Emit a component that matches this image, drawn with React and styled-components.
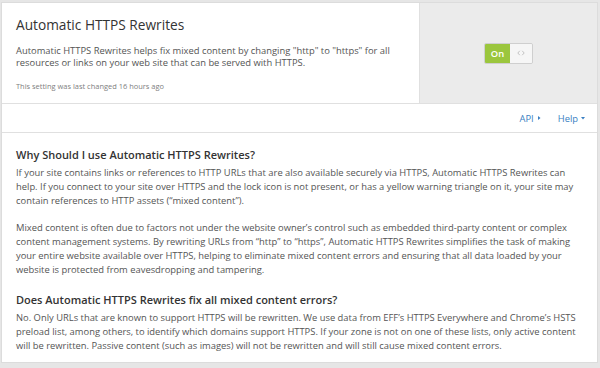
import React from "react";
import styled, { createGlobalStyle } from "styled-components";

const Global = createGlobalStyle`
  html, body { margin: 0; padding: 0; background: #e6e6e6; }
  body { font-family: "Open Sans", "Liberation Sans", sans-serif; color: #555; }
  * { box-sizing: border-box; }
`;

const Page = styled.div`
  padding: 2px 2px 5px 1px;
  width: 600px;
  height: 368px;
`;

const Card = styled.div`
  background: #fff;
  border: 1px solid #dcdcdc;
  display: flex;
  flex-direction: column;
`;

const Top = styled.div`
  display: flex;
  border-bottom: 1px solid #e0e0e0;
`;

const Info = styled.div`
  width: 417px;
  padding: 13px 15px 11px 14px;
  display: flex;
  flex-direction: column;
`;

const Title = styled.h2`
  margin: 0;
  font-size: 13.7px;
  line-height: 18px;
  font-weight: 400;
  color: #333;
`;

const Desc = styled.p`
  margin: 10.5px 0 0;
  font-size: 9.38px;
  line-height: 12.8px;
  color: #555;
`;

const Meta = styled.p`
  margin: 11px 0 0;
  font-size: 7.46px;
  line-height: 11px;
  color: #808080;
`;

const Control = styled.div`
  flex: 1;
  background: #ebebeb;
  border-left: 1px solid #e0e0e0;
  display: flex;
  align-items: center;
  justify-content: center;
`;

const Toggle = styled.div`
  display: flex;
  width: 49px;
  height: 21px;
  border: 1px solid #cfcfcf;
  border-radius: 2px;
  overflow: hidden;
`;

const ToggleOn = styled.div`
  width: 25px;
  background: #9bc63d;
  color: #fff;
  font-size: 9.4px;
  font-weight: 600;
  display: flex;
  align-items: center;
  justify-content: center;
`;

const ToggleKnob = styled.div`
  flex: 1;
  background: #f6f6f6;
  display: flex;
  align-items: center;
  justify-content: center;
`;

const Toolbar = styled.div`
  height: 29px;
  display: flex;
  align-items: center;
  justify-content: flex-end;
  gap: 17px;
  padding-right: 12px;
  border-bottom: 1px solid #e0e0e0;
`;

const ToolLink = styled.a`
  font-size: 9.4px;
  color: #3a7fc2;
  text-decoration: none;
  display: flex;
  align-items: center;
  gap: 3px;
`;

const Body = styled.div`
  padding: 14px 15px 9px 14px;
`;

const Heading = styled.h3`
  margin: ${(p) => (p.$first ? "0" : "15.5px")} 0 3.5px;
  font-size: 11px;
  line-height: 15px;
  font-weight: 600;
  color: #333;
`;

const Para = styled.p`
  margin: ${(p) => (p.$spaced ? "13px" : "0")} 0 0;
  font-size: 9.38px;
  line-height: 14px;
  color: #555;
`;

const Caret = ({ dir }) => (
  <svg width="4" height="4" viewBox="0 0 4 4">
    {dir === "right" ? (
      <path d="M1 0 L3.5 2 L1 4 Z" fill="#3a7fc2" />
    ) : (
      <path d="M0 1 L4 1 L2 3.5 Z" fill="#3a7fc2" />
    )}
  </svg>
);

const Arrows = () => (
  <svg width="8" height="6" viewBox="0 0 8 6">
    <path d="M2.8 0.8 L0.8 3 L2.8 5.2" fill="none" stroke="#c2c2c2" strokeWidth="1" />
    <path d="M5.2 0.8 L7.2 3 L5.2 5.2" fill="none" stroke="#c2c2c2" strokeWidth="1" />
  </svg>
);

export default function App() {
  return (
    <>
      <Global />
      <Page>
        <Card>
          <Top>
            <Info>
              <Title>Automatic HTTPS Rewrites</Title>
              <Desc>
                Automatic HTTPS Rewrites helps fix mixed content by changing "http" to "https" for all
                resources or links on your web site that can be served with HTTPS.
              </Desc>
              <Meta>This setting was last changed 16 hours ago</Meta>
            </Info>
            <Control>
              <Toggle>
                <ToggleOn>On</ToggleOn>
                <ToggleKnob>
                  <Arrows />
                </ToggleKnob>
              </Toggle>
            </Control>
          </Top>
          <Toolbar>
            <ToolLink href="#">
              API <Caret dir="right" />
            </ToolLink>
            <ToolLink href="#">
              Help <Caret dir="down" />
            </ToolLink>
          </Toolbar>
          <Body>
            <Heading $first>Why Should I use Automatic HTTPS Rewrites?</Heading>
            <Para>
              If your site contains links or references to HTTP URLs that are also available securely via
              HTTPS, Automatic HTTPS Rewrites can help. If you connect to your site over HTTPS and the lock
              icon is not present, or has a yellow warning triangle on it, your site may contain references
              to HTTP assets (“mixed content”).
            </Para>
            <Para $spaced>
              Mixed content is often due to factors not under the website owner’s control such as embedded
              third-party content or complex content management systems. By rewriting URLs from “http” to
              “https”, Automatic HTTPS Rewrites simplifies the task of making your entire website available
              over HTTPS, helping to eliminate mixed content errors and ensuring that all data loaded by your
              website is protected from eavesdropping and tampering.
            </Para>
            <Heading>Does Automatic HTTPS Rewrites fix all mixed content errors?</Heading>
            <Para>
              No. Only URLs that are known to support HTTPS will be rewritten. We use data from EFF’s HTTPS
              Everywhere and Chrome’s HSTS preload list, among others, to identify which domains support
              HTTPS. If your zone is not on one of these lists, only active content will be rewritten.
              Passive content (such as images) will not be rewritten and will still cause mixed content
              errors.
            </Para>
          </Body>
        </Card>
      </Page>
    </>
  );
}
